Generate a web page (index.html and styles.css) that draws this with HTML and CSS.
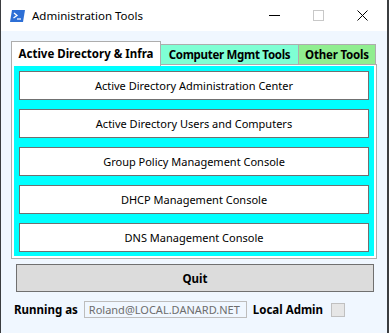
FILE: index.html
```html
<!DOCTYPE html>
<html lang="en">
<head>
<meta charset="UTF-8">
<title>Administration Tools</title>
<link rel="stylesheet" href="styles.css">
</head>
<body>

<div class="window">
  <div class="titlebar">
    <svg class="app-icon" width="15" height="12" viewBox="0 0 15 12">
      <polygon points="2,0 15,0 13,12 0,12" fill="#2d6fd6"/>
      <polyline points="4,3 7,5.5 3.5,8" fill="none" stroke="#fff" stroke-width="1.3"/>
      <line x1="7" y1="9" x2="11" y2="9" stroke="#fff" stroke-width="1.2"/>
    </svg>
    <span class="title">Administration Tools</span>
    <div class="controls">
      <svg width="11" height="11" viewBox="0 0 11 11"><line x1="0" y1="5.5" x2="11" y2="5.5" stroke="#000" stroke-width="1"/></svg>
      <svg width="11" height="11" viewBox="0 0 11 11"><rect x="0.5" y="0.5" width="10" height="10" fill="none" stroke="#c8c8c8" stroke-width="1"/></svg>
      <svg width="11" height="11" viewBox="0 0 11 11"><path d="M0.5 0.5 L10.5 10.5 M10.5 0.5 L0.5 10.5" stroke="#000" stroke-width="1"/></svg>
    </div>
  </div>

  <div class="content">
    <div class="tabs">
      <div class="tab active">Active Directory &amp; Infra</div>
      <div class="tab comp">Computer Mgmt Tools</div>
      <div class="tab other">Other Tools</div>
    </div>
    <div class="panel">
      <div class="tool-list">
        <button class="tool-btn">Active Directory Administration Center</button>
        <button class="tool-btn">Active Directory Users and Computers</button>
        <button class="tool-btn">Group Policy Management Console</button>
        <button class="tool-btn">DHCP Management Console</button>
        <button class="tool-btn">DNS Management Console</button>
      </div>
    </div>

    <button class="quit-btn">Quit</button>

    <div class="status">
      <span class="label">Running as</span>
      <div class="user-box">Roland@LOCAL.DANARD.NET</div>
      <span class="label">Local Admin</span>
      <div class="check"></div>
    </div>
  </div>
</div>

</body>
</html>
```

FILE: styles.css
```css
body {
  margin: 0;
  background-color: #3b3d40;
  font-family: 'Noto Sans', sans-serif;
  font-size: 11px;
  color: #000;
}

.window {
  margin-left: 1px;
  width: 386px;
  height: 333px;
  background-color: #f0f7ff;
  overflow: hidden;
}

.titlebar {
  height: 31px;
  background: #fff;
  display: flex;
  align-items: center;
  padding-left: 9px;
}

.app-icon {
  margin-right: 7px;
}

.title {
  font-size: 11.5px;
  flex: 1;
}

.controls {
  display: flex;
  gap: 33px;
  margin-right: 19px;
}

.content {
  padding: 10px 0 0 10px;
}

.tabs {
  display: flex;
  align-items: flex-end;
  height: 25px;
  margin-bottom: -2px;
  position: relative;
  z-index: 1;
}

.tab {
  box-sizing: border-box;
  font-weight: bold;
  font-size: 11.5px;
  height: 20px;
  line-height: 19px;
  border: 1px solid #adadad;
  border-bottom: none;
  margin-bottom: 2px;
  text-align: center;
  white-space: nowrap;
}

.tab.active {
  width: 150px;
  height: 25px;
  line-height: 24px;
  margin-bottom: 0;
  background: #fff;
}

.tab.comp {
  width: 138px;
  background: #7fffd4;
  border-left: none;
  letter-spacing: -0.3px;
}

.tab.other {
  width: 77px;
  background: #90ee90;
  border-left: none;
  letter-spacing: -0.2px;
}

.panel {
  width: 360px;
  border: 1px solid #adadad;
  background: #fff;
  padding: 1px 2px 2px 2px;
}

.tool-list {
  background: #00ffff;
  padding: 5px 5px 4px 5px;
  display: flex;
  flex-direction: column;
  gap: 9px;
}

.tool-btn {
  height: 29px;
  background: #fff;
  border: 1px solid #707070;
  font-family: 'Noto Sans', sans-serif;
  font-size: 11px;
  color: #000;
  padding: 0;
}

.quit-btn {
  display: block;
  margin: 5px 0 0 5px;
  width: 358px;
  height: 28px;
  background: #dcdcdc;
  border: 1px solid #707070;
  font-family: 'Noto Sans', sans-serif;
  font-size: 11.5px;
  font-weight: bold;
  color: #000;
}

.status {
  display: flex;
  align-items: center;
  margin-top: 9px;
  padding-left: 3px;
}

.label {
  font-weight: bold;
  font-size: 11.5px;
}

.user-box {
  margin: 0 6px 0 6px;
  width: 157px;
  height: 15px;
  border: 1px solid #bdbdbd;
  background: #f0f7ff;
  color: #6d6d6d;
  font-size: 11px;
  line-height: 15px;
  padding-left: 4px;
}

.check {
  margin-left: 8px;
  width: 12px;
  height: 12px;
  border: 1px solid #c0c0c0;
  background: #e6e6e6;
}
```
